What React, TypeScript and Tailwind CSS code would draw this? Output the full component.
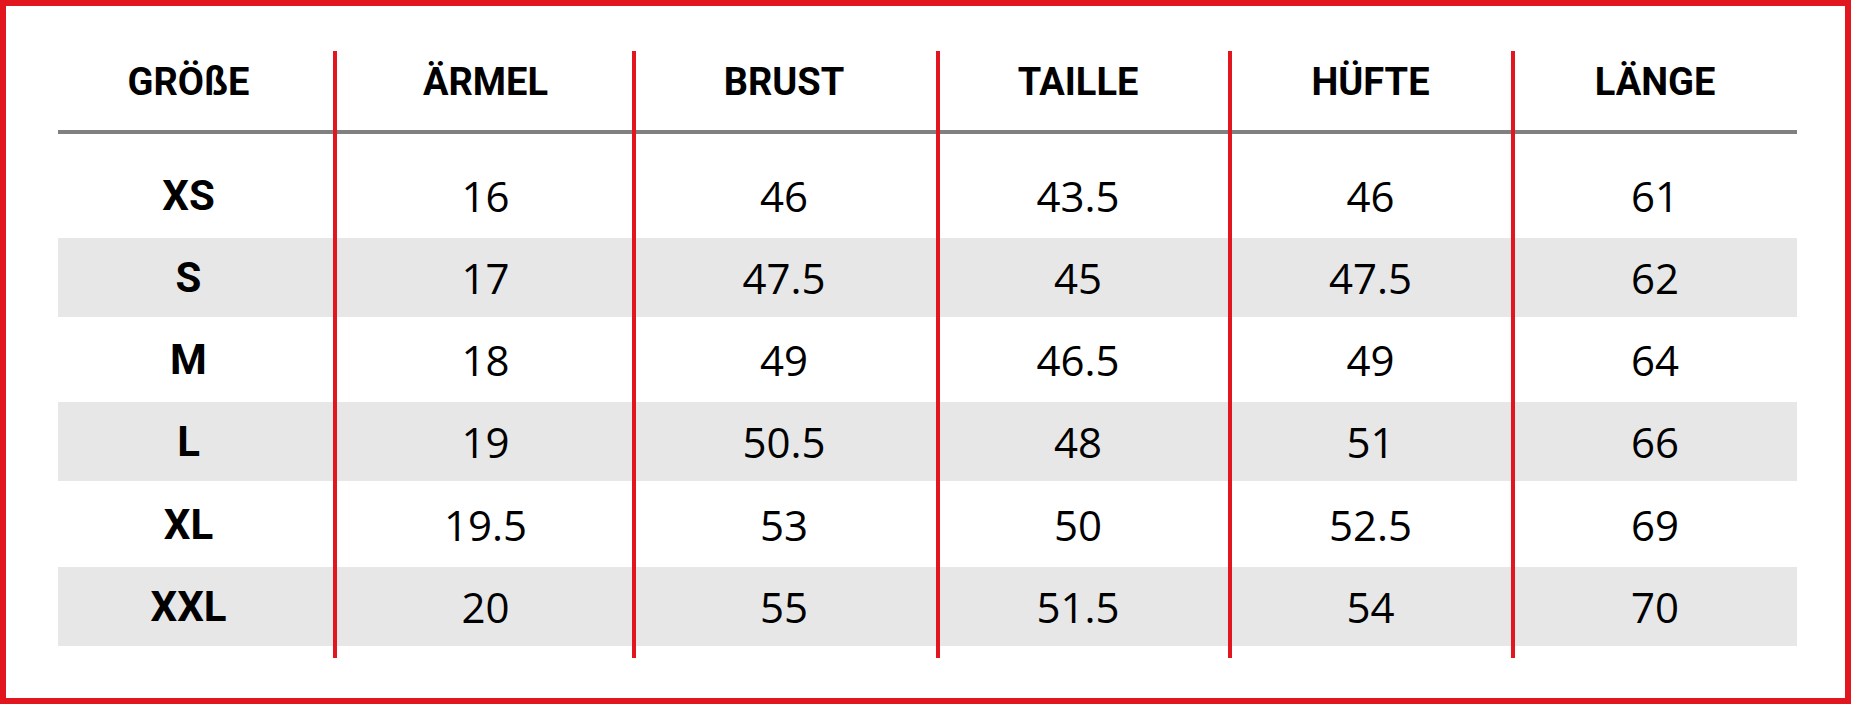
import React from "react";

const headers = ["GRÖßE", "ÄRMEL", "BRUST", "TAILLE", "HÜFTE", "LÄNGE"];
const rows: string[][] = [
  ["XS", "16", "46", "43.5", "46", "61"],
  ["S", "17", "47.5", "45", "47.5", "62"],
  ["M", "18", "49", "46.5", "49", "64"],
  ["L", "19", "50.5", "48", "51", "66"],
  ["XL", "19.5", "53", "50", "52.5", "69"],
  ["XXL", "20", "55", "51.5", "54", "70"],
];
const rowHeights = ["h-[86px]", "h-[79px]", "h-[85px]", "h-[79px]", "h-[86px]", "h-[79px]"];

const colPad = ["pr-[14px]", "pl-[2px]", "pr-[4px]", "pr-[12px]", "pr-[2px]", "pr-[2px]"];
const sep = (ci: number) => (ci > 0 ? "border-l-4 border-[#e2161e]" : "");

export default function App() {
  return (
    <div className="w-[1851px] h-[704px] box-border border-[6px] border-[#e2161e] bg-white pl-[52px] pt-[45px]">
      <div className="grid grid-cols-[275px_299px_304px_292px_283px_286px]">
        {headers.map((h, ci) => (
          <div
            key={"h" + ci}
            className={`h-[79px] flex justify-center items-start pt-[3px] ${sep(ci)} ${colPad[ci]}`}
          >
            <span className="text-[38px] font-bold text-black leading-normal" style={{ fontFamily: "Roboto, 'Liberation Sans', sans-serif" }}>
              {h}
            </span>
          </div>
        ))}
        {headers.map((_, ci) => (
          <div key={"l" + ci} className={`h-[4px] bg-[#808080] ${sep(ci)}`} />
        ))}
        {headers.map((_, ci) => (
          <div key={"s" + ci} className={`h-[18px] ${sep(ci)}`} />
        ))}
        {rows.map((r, ri) =>
          r.map((v, ci) => (
            <div
              key={ri + "-" + ci}
              className={`${rowHeights[ri]} flex items-center justify-center ${ri % 2 === 1 ? "bg-[#e7e7e7]" : "bg-white"} ${sep(ci)} ${colPad[ci]}`}
            >
              {ci === 0 ? (
                <span className="text-[42px] font-bold text-black leading-normal" style={{ fontFamily: "Roboto, 'Liberation Sans', sans-serif" }}>
                  {v}
                </span>
              ) : (
                <span className="text-[42px] font-normal text-black leading-normal" style={{ fontFamily: "'Open Sans', 'Noto Sans', sans-serif" }}>
                  {v}
                </span>
              )}
            </div>
          ))
        )}
        {headers.map((_, ci) => (
          <div key={"b" + ci} className={`h-[12px] ${sep(ci)}`} />
        ))}
      </div>
    </div>
  );
}
